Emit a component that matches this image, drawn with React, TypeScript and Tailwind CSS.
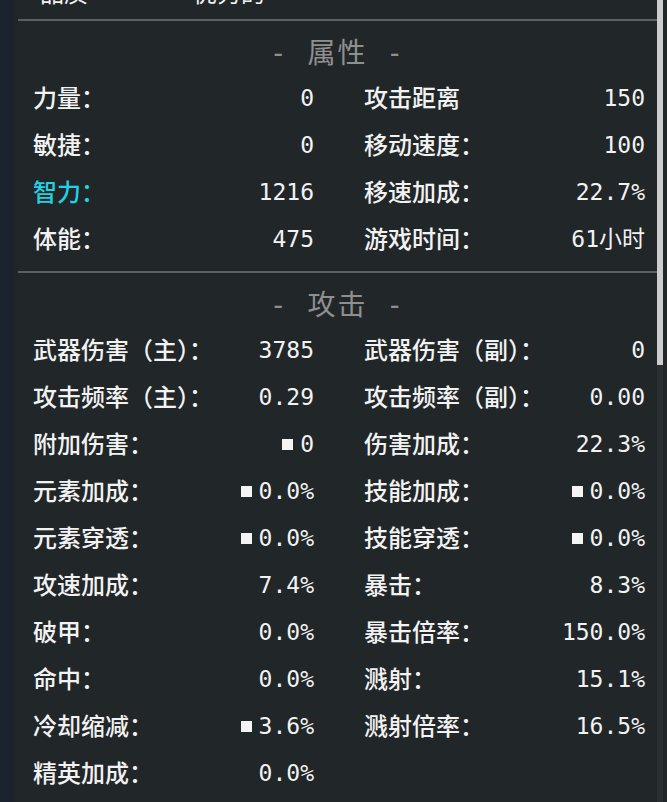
import React from 'react';

type Stat = { label: string; value: string; dot?: boolean; cyan?: boolean };

const attrs: Stat[] = [
  { label: '力量：', value: '0' },
  { label: '攻击距离', value: '150' },
  { label: '敏捷：', value: '0' },
  { label: '移动速度：', value: '100' },
  { label: '智力：', value: '1216', cyan: true },
  { label: '移速加成：', value: '22.7%' },
  { label: '体能：', value: '475' },
  { label: '游戏时间：', value: '61小时' },
];

const attack: Stat[] = [
  { label: '武器伤害（主）：', value: '3785' },
  { label: '武器伤害（副）：', value: '0' },
  { label: '攻击频率（主）：', value: '0.29' },
  { label: '攻击频率（副）：', value: '0.00' },
  { label: '附加伤害：', value: '0', dot: true },
  { label: '伤害加成：', value: '22.3%' },
  { label: '元素加成：', value: '0.0%', dot: true },
  { label: '技能加成：', value: '0.0%', dot: true },
  { label: '元素穿透：', value: '0.0%', dot: true },
  { label: '技能穿透：', value: '0.0%', dot: true },
  { label: '攻速加成：', value: '7.4%' },
  { label: '暴击：', value: '8.3%' },
  { label: '破甲：', value: '0.0%' },
  { label: '暴击倍率：', value: '150.0%' },
  { label: '命中：', value: '0.0%' },
  { label: '溅射：', value: '15.1%' },
  { label: '冷却缩减：', value: '3.6%', dot: true },
  { label: '溅射倍率：', value: '16.5%' },
  { label: '精英加成：', value: '0.0%' },
];

const Row: React.FC<{ s: Stat }> = ({ s }) => (
  <div className="h-[47px] flex items-center justify-between">
    <span className={`text-[24px] font-medium ${s.cyan ? 'text-[#1fd3e3]' : 'text-[#f2f2f2]'}`}>{s.label}</span>
    <span className="flex items-center text-[#f2f2f2] text-[23px]">
      {s.dot && <span className="inline-block w-[11px] h-[11px] bg-[#f4f4f4] mr-[7px]" />}
      {s.value}
    </span>
  </div>
);

const Header: React.FC<{ title: string }> = ({ title }) => (
  <div className="h-[54px] pt-[12px] flex items-center justify-center text-[#8f8f8f] text-[28px] tracking-[2px]">
    - {title} -
  </div>
);

export default function App() {
  return (
    <div
      className="w-[667px] h-[802px] overflow-hidden flex bg-[#212628]"
      style={{ fontFamily: '"DejaVu Sans Mono", "Noto Sans CJK SC", monospace' }}
    >
      <div className="w-[14px] shrink-0 bg-[#1b2331]" />
      <div className="w-[4px] shrink-0 bg-[#1f2528]" />
      <div className="flex-1 flex flex-col">
        {/* row clipped by the top edge */}
        <div className="mt-[-30px] h-[47px] pl-[22px] flex items-center gap-[105px] text-[#f2f2f2] text-[24px]">
          <span>品质</span>
          <span>优秀的</span>
        </div>
        <div className="mt-[2px] h-[2px] bg-[#5c6062]" />
        <Header title="属性" />
        <div className="grid grid-cols-2 gap-x-[50px] pl-[15px] pr-[12px] pb-[8px]">
          {attrs.map((s, i) => (
            <Row key={i} s={s} />
          ))}
        </div>
        <div className="h-[2px] bg-[#5c6062]" />
        <Header title="攻击" />
        <div className="grid grid-cols-2 gap-x-[50px] pl-[15px] pr-[12px]">
          {attack.map((s, i) => (
            <Row key={i} s={s} />
          ))}
        </div>
      </div>
      <div className="w-[10px] shrink-0 flex flex-col">
        <div className="h-[365px] w-[6px] bg-[#cdcdcd]" />
        <div className="flex-1 w-[6px] bg-[#2a2f31]" />
      </div>
    </div>
  );
}
